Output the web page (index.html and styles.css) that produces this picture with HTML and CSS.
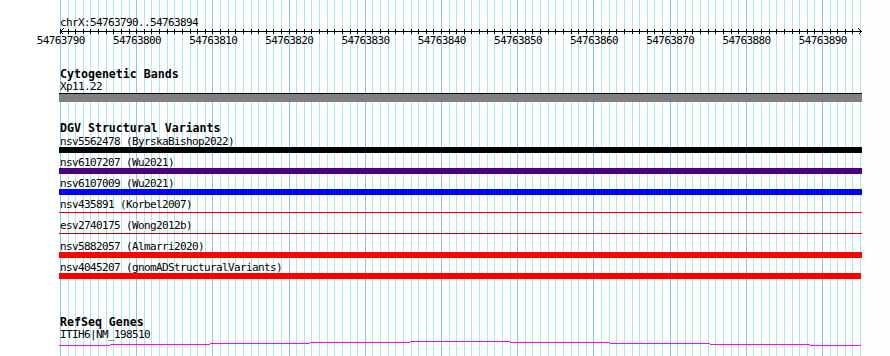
FILE: index.html
```html
<!DOCTYPE html>
<html lang="en">
<head>
  <meta charset="UTF-8">
  <title>chrX:54763790..54763894</title>
  <link rel="stylesheet" href="styles.css">
</head>
<body>
  <div class="panel">
    <svg class="grid" id="grid" width="862" height="356" shape-rendering="crispEdges"></svg>

    <div class="content">
      <div class="label">chrX:54763790..54763894</div>

      <svg class="ruler" id="ruler" width="803" height="7" shape-rendering="crispEdges">
        <rect x="1" y="3" width="802" height="1" fill="#000"/>
        <path d="M4.5,0.5 L1.5,3.5 L4.5,6.5" fill="none" stroke="#000" stroke-width="1"/>
        <path d="M799.5,0.5 L802.5,3.5 L799.5,6.5" fill="none" stroke="#000" stroke-width="1"/>
      </svg>

      <div class="scale">
        <span>54763790</span><span>54763800</span><span>54763810</span><span>54763820</span>
        <span>54763830</span><span>54763840</span><span>54763850</span><span>54763860</span>
        <span>54763870</span><span>54763880</span><span>54763890</span>
      </div>

      <div class="title cyto-title">Cytogenetic Bands</div>
      <div class="label">Xp11.22</div>
      <div class="cyto-bar"></div>

      <div class="title dgv-title">DGV Structural Variants</div>
      <div class="features">
        <div class="feature">
          <div class="label">nsv5562478 (ByrskaBishop2022)</div>
          <div class="bar black"></div>
        </div>
        <div class="feature">
          <div class="label">nsv6107207 (Wu2021)</div>
          <div class="bar indigo"></div>
        </div>
        <div class="feature">
          <div class="label">nsv6107009 (Wu2021)</div>
          <div class="bar blue"></div>
        </div>
        <div class="feature">
          <div class="label">nsv435891 (Korbel2007)</div>
          <div class="line red"></div>
        </div>
        <div class="feature">
          <div class="label">esv2740175 (Wong2012b)</div>
          <div class="line darkred"></div>
        </div>
        <div class="feature">
          <div class="label">nsv5882057 (Almarri2020)</div>
          <div class="bar red"></div>
        </div>
        <div class="feature">
          <div class="label">nsv4045207 (gnomADStructuralVariants)</div>
          <div class="bar red short"></div>
        </div>
      </div>

      <div class="title refseq-title">RefSeq Genes</div>
      <div class="label">ITIH6|NM_198510</div>
      <svg class="gene" width="803" height="6" shape-rendering="crispEdges">
        <g fill="#ff00ff">
          <rect x="0" y="5" width="51" height="1"/>
          <rect x="51" y="4" width="100" height="1"/>
          <rect x="151" y="3" width="100" height="1"/>
          <rect x="251" y="2" width="100" height="1"/>
          <rect x="351" y="1" width="100" height="1"/>
          <rect x="451" y="2" width="100" height="1"/>
          <rect x="551" y="3" width="100" height="1"/>
          <rect x="651" y="4" width="100" height="1"/>
          <rect x="751" y="5" width="51" height="1"/>
        </g>
      </svg>
    </div>
  </div>

  <script src="script.js"></script>
</body>
</html>
```

FILE: styles.css
```css
body {
  margin: 0;
  background: #fcfffc;
  font-family: "DejaVu Sans Mono", "Liberation Mono", monospace;
  color: #000;
}

.panel {
  position: relative;
  width: 862px;
  height: 356px;
  background: #fff;
  overflow: hidden;
}

.grid {
  position: absolute;
  left: 0;
  top: 0;
}

.content {
  position: relative;
  width: 803px;
  padding: 17px 0 0 59px;
}

.label {
  font-size: 11px;
  letter-spacing: -0.62px;
  line-height: 11px;
  height: 11px;
  padding-left: 1px;
  white-space: pre;
}

.title {
  font-size: 11.6px;
  font-weight: bold;
  line-height: 14px;
  height: 14px;
  padding-left: 1px;
  white-space: pre;
}

.ruler {
  display: block;
}

.scale {
  display: flex;
  margin-left: -36.3px;
  height: 11px;
  font-size: 11px;
  letter-spacing: -0.62px;
  line-height: 11px;
}

.scale span {
  flex: 0 0 76.2px;
  text-align: center;
}

.cyto-title {
  margin-top: 21px;
}

.cyto-bar {
  margin-top: 1px;
  height: 8px;
  background: #808080;
  border-top: 1px solid #000;
}

.dgv-title {
  margin-top: 19px;
}

.features {
  margin-top: 1px;
}

.feature {
  height: 21px;
}

.bar {
  height: 6px;
}

.line {
  margin-top: 2px;
  height: 1px;
}

.bar.short {
  width: 802px;
}

.black { background: #000; }
.indigo { background: #4b0082; }
.blue { background: #0000ff; }
.red { background: #ff0000; }
.darkred { background: #cc0000; }

.refseq-title {
  margin-top: 32px;
}

.gene {
  display: block;
}
```

FILE: script.js
```js
// grid lines and ruler ticks, one per base (7.62px per bp)
var NS = 'http://www.w3.org/2000/svg';
var grid = document.getElementById('grid');
var ruler = document.getElementById('ruler');

function rect(parent, x, y, w, h, fill) {
  var r = document.createElementNS(NS, 'rect');
  r.setAttribute('x', x);
  r.setAttribute('y', y);
  r.setAttribute('width', w);
  r.setAttribute('height', h);
  r.setAttribute('fill', fill);
  parent.appendChild(r);
}

for (var i = 0; i <= 105; i++) {
  var x = Math.round(60 + i * 7.62);
  rect(grid, x, 0, 1, 356, i % 10 === 0 ? '#87c5ea' : '#a9e9ea');
  if (i <= 104) {
    rect(ruler, x - 59, 1, 1, 5, '#000');
  }
}
```
